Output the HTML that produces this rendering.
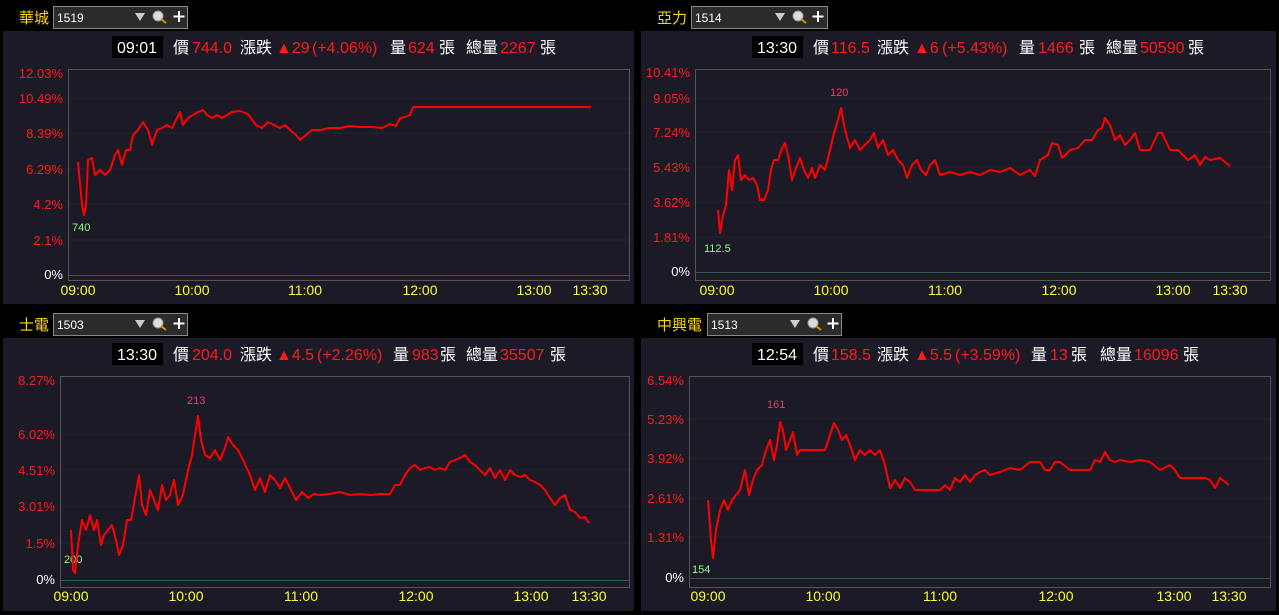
<!DOCTYPE html>
<html><head><meta charset="utf-8"><style>
html,body{margin:0;padding:0;background:#000;width:1279px;height:615px;overflow:hidden}
svg{display:block}
text{font-family:"Liberation Sans","Noto Sans CJK TC",sans-serif}
.yl{fill:#ff1a1a;font-size:13px;text-anchor:end}
.z{fill:#fff;font-size:13px;text-anchor:end}
.tl{fill:#ffff33;font-size:14px;text-anchor:middle}
.nm{fill:#ffd700;font-size:15px}
.cd{fill:#fff;font-size:12px}
.info text{font-size:16px;fill:#fff}
.info text.r{fill:#ff1a1a}
.ln{fill:none;stroke:#ff0000;stroke-width:2;stroke-linejoin:round}
.box{fill:none;stroke:#555;stroke-width:1}
.g{stroke:#23222c;stroke-width:1}
.zl{stroke:#2e5a4e;stroke-width:1}
</style></head><body>
<svg width="1279" height="615" viewBox="0 0 1279 615">
<rect width="1279" height="615" fill="#000"/>
<rect x="3" y="31" width="631" height="273" fill="#1b1a26"/>
<rect x="641" y="31" width="635" height="273" fill="#1b1a26"/>
<rect x="3" y="338" width="631" height="273" fill="#1b1a26"/>
<rect x="641" y="338" width="635" height="273" fill="#1b1a26"/>

<g>
<text x="19" y="23" class="nm">華城</text>
<rect x="53.5" y="6.5" width="134" height="22" fill="#2b2b2b" stroke="#888"/>
<text x="57" y="22" class="cd">1519</text>
<polygon points="135,13 145,13 140,21" fill="#ccc"/>
<circle cx="158" cy="16" r="5" fill="#ddd" stroke="#999"/><line x1="161" y1="19" x2="166" y2="23" stroke="#c90" stroke-width="2"/>
<path d="M179 11v11M173.5 16.5h11" stroke="#fff" stroke-width="2"/>
</g>
<g>
<text x="657" y="23" class="nm">亞力</text>
<rect x="691.5" y="6.5" width="136" height="22" fill="#2b2b2b" stroke="#888"/>
<text x="695" y="22" class="cd">1514</text>
<polygon points="775,13 785,13 780,21" fill="#ccc"/>
<circle cx="798" cy="16" r="5" fill="#ddd" stroke="#999"/><line x1="801" y1="19" x2="806" y2="23" stroke="#c90" stroke-width="2"/>
<path d="M818 11v11M812.5 16.5h11" stroke="#fff" stroke-width="2"/>
</g>
<g>
<text x="19" y="330" class="nm">士電</text>
<rect x="53.5" y="313.5" width="134" height="22" fill="#2b2b2b" stroke="#888"/>
<text x="57" y="329" class="cd">1503</text>
<polygon points="135,320 145,320 140,328" fill="#ccc"/>
<circle cx="158" cy="323" r="5" fill="#ddd" stroke="#999"/><line x1="161" y1="326" x2="166" y2="330" stroke="#c90" stroke-width="2"/>
<path d="M179 318v11M173.5 323.5h11" stroke="#fff" stroke-width="2"/>
</g>
<g>
<text x="657" y="330" class="nm">中興電</text>
<rect x="707.5" y="313.5" width="134" height="22" fill="#2b2b2b" stroke="#888"/>
<text x="711" y="329" class="cd">1513</text>
<polygon points="790,320 800,320 795,328" fill="#ccc"/>
<circle cx="813" cy="323" r="5" fill="#ddd" stroke="#999"/><line x1="816" y1="326" x2="821" y2="330" stroke="#c90" stroke-width="2"/>
<path d="M833 318v11M827.5 323.5h11" stroke="#fff" stroke-width="2"/>
</g>

<g class="info">
<rect x="112" y="36" width="51" height="22" fill="#000"/>
<text x="117" y="53">09:01</text>
<text x="173" y="53">價</text><text x="192" y="53" class="r">744.0</text><text x="240" y="53">漲跌</text><text x="276" y="53" class="r">▲29</text><text x="312" y="53" class="r">(+4.06%)</text><text x="390" y="53">量</text><text x="408" y="53" class="r">624</text><text x="439" y="53">張</text><text x="466" y="53">總量</text><text x="500" y="53" class="r">2267</text><text x="540" y="53">張</text>

<rect x="752" y="36" width="51" height="22" fill="#000"/>
<text x="757" y="53">13:30</text>
<text x="813" y="53">價</text><text x="831" y="53" class="r">116.5</text><text x="877" y="53">漲跌</text><text x="914" y="53" class="r">▲6</text><text x="942" y="53" class="r">(+5.43%)</text><text x="1019" y="53">量</text><text x="1038" y="53" class="r">1466</text><text x="1079" y="53">張</text><text x="1106" y="53">總量</text><text x="1140" y="53" class="r">50590</text><text x="1188" y="53">張</text>

<rect x="112" y="343" width="51" height="22" fill="#000"/>
<text x="117" y="360">13:30</text>
<text x="173" y="360">價</text><text x="192" y="360" class="r">204.0</text><text x="240" y="360">漲跌</text><text x="276" y="360" class="r">▲4.5</text><text x="317" y="360" class="r">(+2.26%)</text><text x="393" y="360">量</text><text x="412" y="360" class="r">983</text><text x="440" y="360">張</text><text x="466" y="360">總量</text><text x="500" y="360" class="r">35507</text><text x="550" y="360">張</text>

<rect x="752" y="343" width="51" height="22" fill="#000"/>
<text x="757" y="360">12:54</text>
<text x="813" y="360">價</text><text x="831" y="360" class="r">158.5</text><text x="877" y="360">漲跌</text><text x="914" y="360" class="r">▲5.5</text><text x="955" y="360" class="r">(+3.59%)</text><text x="1031" y="360">量</text><text x="1050" y="360" class="r">13</text><text x="1071" y="360">張</text><text x="1100" y="360">總量</text><text x="1134" y="360" class="r">16096</text><text x="1183" y="360">張</text>
</g>

<g>
<line x1="68" y1="98" x2="630" y2="98" class="g"/><line x1="68" y1="133" x2="630" y2="133" class="g"/><line x1="68" y1="169" x2="630" y2="169" class="g"/><line x1="68" y1="204" x2="630" y2="204" class="g"/><line x1="68" y1="240" x2="630" y2="240" class="g"/>
<line x1="68" y1="275.5" x2="630" y2="275.5" class="zl"/>
<rect x="68.5" y="69.5" width="561" height="211" class="box"/>
<text x="63" y="78" class="yl">12.03%</text><text x="63" y="103" class="yl">10.49%</text><text x="63" y="138" class="yl">8.39%</text><text x="63" y="174" class="yl">6.29%</text><text x="63" y="209" class="yl">4.2%</text><text x="63" y="245" class="yl">2.1%</text><text x="63" y="279" class="z">0%</text>
<text x="78" y="295" class="tl">09:00</text><text x="192" y="295" class="tl">10:00</text><text x="305" y="295" class="tl">11:00</text><text x="420" y="295" class="tl">12:00</text><text x="534" y="295" class="tl">13:00</text><text x="590" y="295" class="tl">13:30</text>
<text x="72" y="231" fill="#88ff88" font-size="11">740</text>
<polyline class="ln" points="78,162 82,205 84,215 86,205 88,160 92,158 95,175 100,170 105,175 110,170 115,155 118,150 122,165 126,150 130,150 133,135 138,130 143,122 148,130 152,145 157,130 162,128 167,125 172,128 176,120 180,112 183,125 188,118 193,115 198,112 203,110 207,115 212,118 217,115 222,118 227,115 232,112 240,111 248,114 256,125 262,128 268,122 274,125 280,128 285,125 290,130 296,135 300,140 306,135 312,130 320,130 330,128 340,128 350,126 360,127 372,127 382,128 390,124 396,126 400,118 405,117 410,115 413,107 591,107"/>
</g>

<g>
<line x1="695" y1="98" x2="1270" y2="98" class="g"/><line x1="695" y1="132" x2="1270" y2="132" class="g"/><line x1="695" y1="167" x2="1270" y2="167" class="g"/><line x1="695" y1="202" x2="1270" y2="202" class="g"/><line x1="695" y1="237" x2="1270" y2="237" class="g"/>
<line x1="695" y1="272.5" x2="1270" y2="272.5" class="zl"/>
<rect x="695.5" y="69.5" width="575" height="211" class="box"/>
<text x="690" y="77" class="yl">10.41%</text><text x="690" y="103" class="yl">9.05%</text><text x="690" y="137" class="yl">7.24%</text><text x="690" y="172" class="yl">5.43%</text><text x="690" y="207" class="yl">3.62%</text><text x="690" y="242" class="yl">1.81%</text><text x="690" y="276" class="z">0%</text>
<text x="717" y="295" class="tl">09:00</text><text x="831" y="295" class="tl">10:00</text><text x="945" y="295" class="tl">11:00</text><text x="1059" y="295" class="tl">12:00</text><text x="1173" y="295" class="tl">13:00</text><text x="1230" y="295" class="tl">13:30</text>
<text x="704" y="252" fill="#88ff88" font-size="11">112.5</text>
<text x="830" y="96" fill="#ff3366" font-size="11">120</text>
<polyline class="ln" points="718,210 720,233 723,215 726,205 729,170 732,190 735,160 738,155 741,180 745,175 749,180 753,178 757,185 760,200 764,200 768,190 771,170 774,160 778,160 782,148 785,143 788,155 792,180 796,168 800,158 804,170 808,178 812,168 815,178 820,165 825,170 830,150 834,133 838,120 841,108 845,130 850,148 855,140 860,150 865,145 870,140 874,133 878,148 883,140 888,155 893,150 898,160 903,165 907,178 912,165 917,160 921,170 926,175 930,165 935,160 940,175 950,172 960,175 970,172 980,175 990,170 1000,172 1010,168 1020,175 1030,170 1035,176 1040,160 1048,155 1052,143 1058,145 1062,158 1070,150 1078,148 1085,140 1092,140 1098,130 1102,128 1105,118 1110,125 1115,140 1120,135 1125,145 1130,140 1135,133 1140,150 1150,150 1158,133 1162,133 1170,150 1178,150 1183,155 1188,160 1195,155 1200,165 1205,157 1210,160 1220,158 1230,166"/>
</g>

<g>
<line x1="60" y1="434" x2="630" y2="434" class="g"/><line x1="60" y1="470" x2="630" y2="470" class="g"/><line x1="60" y1="506" x2="630" y2="506" class="g"/><line x1="60" y1="543" x2="630" y2="543" class="g"/>
<line x1="60" y1="580.5" x2="630" y2="580.5" class="zl"/>
<rect x="60.5" y="376.5" width="569" height="211" class="box"/>
<text x="55" y="385" class="yl">8.27%</text><text x="55" y="439" class="yl">6.02%</text><text x="55" y="475" class="yl">4.51%</text><text x="55" y="511" class="yl">3.01%</text><text x="55" y="548" class="yl">1.5%</text><text x="55" y="584" class="z">0%</text>
<text x="71" y="601" class="tl">09:00</text><text x="186" y="601" class="tl">10:00</text><text x="301" y="601" class="tl">11:00</text><text x="416" y="601" class="tl">12:00</text><text x="531" y="601" class="tl">13:00</text><text x="589" y="601" class="tl">13:30</text>
<text x="64" y="563" fill="#88ff88" font-size="11">200</text>
<text x="187" y="404" fill="#ff3366" font-size="11">213</text>
<polyline class="ln" points="71,530 73,570 75,573 78,545 82,520 86,530 90,515 94,530 97,520 101,545 104,535 108,530 112,525 116,540 119,555 123,545 127,520 131,520 135,498 139,475 142,505 146,515 150,490 154,500 158,510 162,485 166,500 170,495 174,480 178,505 183,495 188,470 192,455 195,435 198,416 201,440 205,455 210,458 215,450 220,460 225,448 228,437 233,445 238,450 244,462 250,475 255,490 260,478 265,492 270,475 275,480 280,488 285,478 290,488 296,500 302,492 308,498 314,494 320,495 330,494 340,492 350,495 360,494 370,495 380,494 390,494 395,485 400,485 405,475 410,468 415,465 420,470 425,468 430,467 435,470 440,468 445,470 450,462 455,460 460,458 465,455 470,462 475,465 480,470 485,475 490,468 495,478 500,470 505,480 510,470 515,475 520,477 525,475 530,480 535,482 540,485 545,490 550,498 555,505 560,498 565,495 570,510 575,512 580,518 585,517 589,523"/>
</g>

<g>
<line x1="689" y1="419" x2="1270" y2="419" class="g"/><line x1="689" y1="458" x2="1270" y2="458" class="g"/><line x1="689" y1="498" x2="1270" y2="498" class="g"/><line x1="689" y1="537" x2="1270" y2="537" class="g"/>
<line x1="689" y1="578.5" x2="1270" y2="578.5" class="zl"/>
<rect x="689.5" y="376.5" width="581" height="211" class="box"/>
<text x="684" y="385" class="yl">6.54%</text><text x="684" y="424" class="yl">5.23%</text><text x="684" y="463" class="yl">3.92%</text><text x="684" y="503" class="yl">2.61%</text><text x="684" y="542" class="yl">1.31%</text><text x="684" y="582" class="z">0%</text>
<text x="708" y="601" class="tl">09:00</text><text x="823" y="601" class="tl">10:00</text><text x="940" y="601" class="tl">11:00</text><text x="1056" y="601" class="tl">12:00</text><text x="1174" y="601" class="tl">13:00</text><text x="1229" y="601" class="tl">13:30</text>
<text x="692" y="573" fill="#88ff88" font-size="11">154</text>
<text x="767" y="408" fill="#ff3366" font-size="11">161</text>
<polyline class="ln" points="708,500 711,540 713,558 716,530 720,510 724,500 728,510 732,500 736,495 740,490 745,470 749,495 753,480 757,470 762,465 766,450 770,440 774,460 777,445 780,422 783,430 786,450 790,440 793,432 797,455 800,450 805,450 815,450 825,450 830,435 834,423 838,430 842,440 846,435 850,445 855,460 860,450 865,455 870,450 875,455 880,450 885,465 890,488 895,480 900,488 905,478 910,482 915,490 940,490 945,485 950,490 955,478 960,482 965,475 970,482 975,475 980,472 985,470 990,475 1000,472 1005,470 1010,468 1020,470 1030,462 1040,462 1045,470 1050,470 1055,462 1060,462 1070,470 1090,470 1095,460 1100,462 1105,452 1110,460 1115,462 1120,460 1130,462 1140,460 1150,462 1160,470 1170,465 1175,470 1180,478 1200,478 1205,478 1210,480 1215,488 1220,478 1229,485"/>
</g>
</svg>
</body></html>
